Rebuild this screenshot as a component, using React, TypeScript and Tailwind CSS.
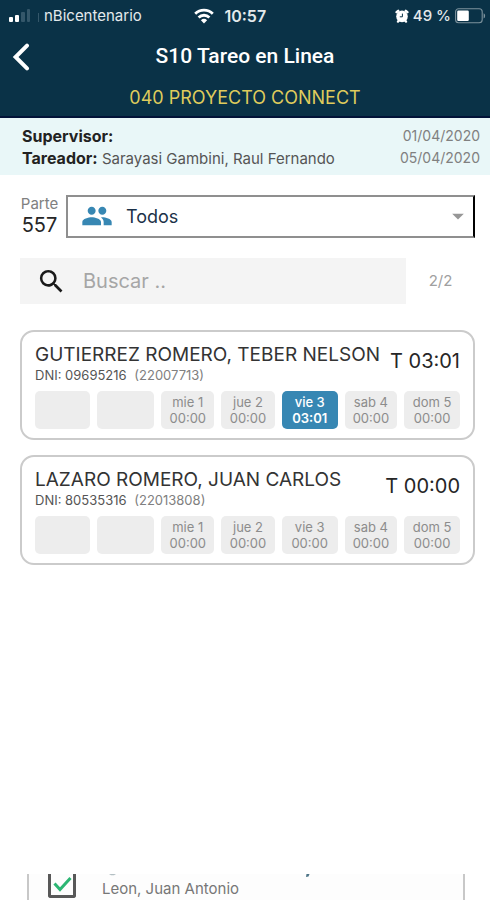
import React, { useState } from 'react';
import { MdArrowDropDown, MdPeople, MdSearch } from 'react-icons/md';

interface Day {
    label: string;
    hours: string;
    active?: boolean;
}

interface Worker {
    name: string;
    dni: string;
    code: string;
    total: string;
    days: Day[];
}

const workers: Worker[] = [
    {
        name: 'GUTIERREZ ROMERO, TEBER NELSON',
        dni: '09695216',
        code: '22007713',
        total: '03:01',
        days: [
            { label: '', hours: '' },
            { label: '', hours: '' },
            { label: 'mie 1', hours: '00:00' },
            { label: 'jue 2', hours: '00:00' },
            { label: 'vie 3', hours: '03:01', active: true },
            { label: 'sab 4', hours: '00:00' },
            { label: 'dom 5', hours: '00:00' },
        ],
    },
    {
        name: 'LAZARO ROMERO, JUAN CARLOS',
        dni: '80535316',
        code: '22013808',
        total: '00:00',
        days: [
            { label: '', hours: '' },
            { label: '', hours: '' },
            { label: 'mie 1', hours: '00:00' },
            { label: 'jue 2', hours: '00:00' },
            { label: 'vie 3', hours: '00:00' },
            { label: 'sab 4', hours: '00:00' },
            { label: 'dom 5', hours: '00:00' },
        ],
    },
];

const SignalIcon = () => (
    <svg width="32" height="14" viewBox="0 0 32 14" aria-hidden="true">
        <rect x="1" y="8" width="4" height="5" rx="1" fill="#fff" />
        <rect x="7" y="6" width="4" height="7" rx="1" fill="#fff" />
        <rect x="13" y="3" width="4" height="10" rx="1" fill="#34576a" />
        <rect x="19" y="0" width="3" height="13" rx="1" fill="#34576a" />
        <rect x="30" y="4" width="1" height="9" fill="#34576a" />
    </svg>
);

const WifiIcon = () => (
    <svg width="20" height="16" viewBox="0 0 20 16" fill="none" stroke="#fff" strokeWidth="2.8" aria-hidden="true">
        <path d="M1.2 5.8a12.6 12.6 0 0 1 17.6 0" />
        <path d="M4.6 9.4a7.8 7.8 0 0 1 10.8 0" />
        <path d="M10 15.4 6.9 12.2a4.5 4.5 0 0 1 6.2 0Z" fill="#fff" stroke="none" />
    </svg>
);

const AlarmIcon = () => (
    <svg width="14" height="15" viewBox="0 0 14 15" aria-hidden="true">
        <path d="M1.6 3.2 3.2 1.8M12.4 3.2 10.8 1.8M3 12.6l1.2-1.6M11 12.6l-1.2-1.6" stroke="#fff" strokeWidth="2.4" strokeLinecap="round" />
        <circle cx="7" cy="7.4" r="5.8" fill="#fff" />
        <path d="M7.4 4.6v3.2H4.8" fill="none" stroke="#0a3247" strokeWidth="1" />
    </svg>
);

const BatteryIcon = () => (
    <svg width="31" height="16" viewBox="0 0 31 16" aria-hidden="true">
        <rect x=".6" y=".8" width="26.6" height="14" rx="3" fill="none" stroke="#7d929d" strokeWidth="1.1" />
        <rect x="2.2" y="2.6" width="11.6" height="10.4" rx="1.2" fill="#fff" />
        <path d="M28.6 5.2c2 .9 2 4.3 0 5.2Z" fill="#7d929d" />
    </svg>
);

const BackIcon = () => (
    <svg width="18" height="28" viewBox="0 0 18 28" fill="none" stroke="#fff" strokeWidth="4" strokeLinecap="round" strokeLinejoin="miter" aria-hidden="true">
        <path d="M15 2.6 3.6 14 15 25.4" />
    </svg>
);

const DayCell: React.FC<{ day: Day }> = ({ day }) => (
    <button
        type="button"
        aria-label={day.label ? undefined : 'Sin fecha'}
        className={`h-[38px] rounded-[5px] text-center text-[13px] leading-4 ${day.active ? 'bg-[#3787b3] font-semibold text-white' : 'bg-[#ededed] text-[#8c8c8c]'}`}
    >
        <span className={`block ${day.active ? 'font-medium' : ''}`}>{day.label}</span>
        <span className="block">{day.hours}</span>
    </button>
);

const WorkerCard: React.FC<{ worker: Worker }> = ({ worker }) => (
    <li className="rounded-[14px] border-2 border-[#cbcbcb] px-[13px] pt-[11px] pb-[9px]">
        <div className="flex items-center justify-between">
            <div>
                <h2 className="text-[19px] leading-6 whitespace-nowrap text-[#333]">{worker.name}</h2>
                <p className="text-[13px] leading-4 text-[#555]">
                    DNI: {worker.dni} <span className="ml-1 text-[#808080]">({worker.code})</span>
                </p>
            </div>
            <p className="pb-1 text-xl leading-6 whitespace-nowrap text-[#262626]">T {worker.total}</p>
        </div>
        <div className="mt-2 grid grid-cols-[55fr_58fr_53fr_54fr_56fr_53fr_56fr] gap-[7px]">
            {worker.days.map((day, i) => <DayCell key={i} day={day} />)}
        </div>
    </li>
);

const App: React.FC = () => {
    const [group, setGroup] = useState('todos');
    const [search, setSearch] = useState('');
    const [checked, setChecked] = useState(true);

    return (
        <div className="flex min-h-screen flex-col bg-white font-['Inter',sans-serif]">
            <header className="border-b-2 border-[#021338] bg-[#0a3247] text-white">
                <div className="grid h-8 grid-cols-[39%_1fr_auto] items-center pr-1 pl-2 text-[15px] text-[#e3e9ec]">
                    <div className="flex items-center gap-1">
                        <SignalIcon />
                        <span className="whitespace-nowrap">nBicentenario</span>
                    </div>
                    <div className="flex items-center gap-[10px] text-base font-semibold">
                        <WifiIcon />
                        10:57
                    </div>
                    <div className="flex items-center justify-end gap-1">
                        <AlarmIcon />
                        <span className="font-medium whitespace-nowrap">49 %</span>
                        <BatteryIcon />
                    </div>
                </div>
                <div className="grid h-[50px] grid-cols-[48px_1fr_48px] items-center">
                    <button type="button" aria-label="Volver" className="pl-3">
                        <BackIcon />
                    </button>
                    <h1 className="text-center font-['Roboto',sans-serif] text-[21px] font-medium">S10 Tareo en Linea</h1>
                </div>
                <p className="h-[34px] text-center text-lg leading-8 text-[#dfcb5c]">040 PROYECTO CONNECT</p>
            </header>

            <section className="flex justify-between bg-[#e9f7f8] pt-[7px] pr-[10px] pb-[6px] pl-[22px] text-[15px] leading-[22px] text-[#555]">
                <div>
                    <p className="h-[22px]"><b className="text-base leading-[22px] font-bold text-[#222]">Supervisor:</b></p>
                    <p className="h-[22px] whitespace-nowrap"><b className="text-base leading-[22px] font-bold text-[#222]">Tareador:</b> Sarayasi Gambini, Raul Fernando</p>
                </div>
                <div className="text-right text-sm leading-[22px] text-[#808080]">
                    <p>01/04/2020</p>
                    <p>05/04/2020</p>
                </div>
            </section>

            <main className="pt-5 pr-[15px] pl-5">
                <div className="flex gap-[7px]">
                    <div className="w-[39px] text-center">
                        <label htmlFor="group" className="block text-[15px] leading-[18px] text-[#808080]">Parte</label>
                        <span className="block text-xl leading-6 text-[#262626]">557</span>
                    </div>
                    <div className="relative flex-1">
                        <MdPeople size={32} className="pointer-events-none absolute top-[5px] left-[15px] text-[#3787b3]" />
                        <select
                            id="group"
                            value={group}
                            onChange={(e) => setGroup(e.target.value)}
                            className="h-[43px] w-full appearance-none border-2 border-[#8f8f8f] border-r-black pl-[58px] text-lg text-[#1b3148] focus:outline-none"
                        >
                            <option value="todos">Todos</option>
                        </select>
                        <MdArrowDropDown size={28} className="pointer-events-none absolute top-[7px] right-[3px] text-[#979797]" />
                    </div>
                </div>

                <div className="mt-5 flex items-center">
                    <label className="flex h-[46px] min-w-0 flex-1 items-center bg-[#f4f4f4] pl-4">
                        <MdSearch size={31} className="text-[#1a1a1a]" />
                        <input
                            type="text"
                            aria-label="Buscar"
                            value={search}
                            onChange={(e) => setSearch(e.target.value)}
                            placeholder="Buscar .."
                            className="ml-4 min-w-0 flex-1 text-xl placeholder:text-[#a6a6a6] focus:outline-none"
                        />
                    </label>
                    <span className="w-[69px] text-center text-[15px] text-[#a0a0a0]">2/2</span>
                </div>

                <ul className="mt-[26px] space-y-[15px]">
                    {workers.map((w) => <WorkerCard key={w.dni} worker={w} />)}
                </ul>
            </main>

            {/* last row of the list, cut off by the bottom of the screen */}
            <footer className="relative mt-auto mr-[25px] ml-[27px] h-[26px] overflow-hidden border-x-2 border-[#c8c8c8] bg-[#fdfdfd]">
                <svg className="pointer-events-none absolute top-0 left-0" width="290" height="4" viewBox="0 0 290 4" aria-hidden="true">
                    <path d="M80 0h7l-2 1.2h-3Z" fill="#b3bfc3" />
                    <path d="M277.5 0h3l-1 2.5-2.5.5Z" fill="#4d7487" />
                </svg>
                <label className="flex items-end pl-[19px]">
                    <span className="relative h-6 w-7">
                        <input
                            type="checkbox"
                            checked={checked}
                            onChange={(e) => setChecked(e.target.checked)}
                            className="block h-6 w-7 appearance-none rounded-b-[3px] border-3 border-t-0 border-[#585858]"
                        />
                        {checked && (
                            <svg className="pointer-events-none absolute top-0 left-0" width="28" height="24" viewBox="0 0 28 24" fill="none" stroke="#2bb673" strokeWidth="3" aria-hidden="true">
                                <path d="m6.5 9.5 5.5 6L22.5 4" />
                            </svg>
                        )}
                    </span>
                    <span className="ml-[26px] text-[15px] leading-[18px] text-[#777]">Leon, Juan Antonio</span>
                </label>
            </footer>
        </div>
    );
};

export default App;
